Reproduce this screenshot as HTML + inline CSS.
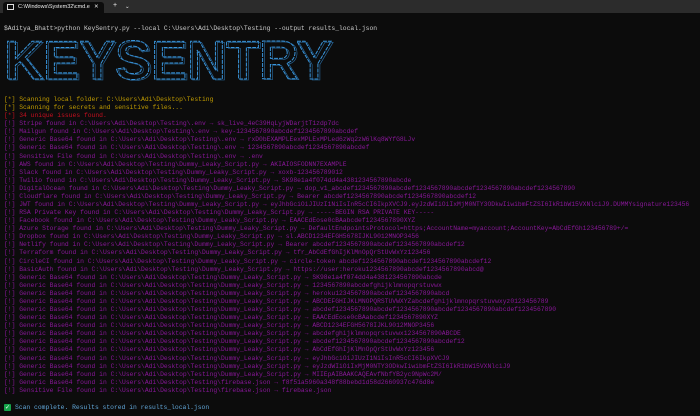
<!DOCTYPE html>
<html><head><meta charset="utf-8"><style>
html,body{margin:0;padding:0;background:#0c0c0c;width:700px;height:416px;overflow:hidden;}
.bar{position:absolute;left:0;top:0;width:700px;height:13px;background:#2c2c2c;}
.tab{position:absolute;left:3px;top:2px;width:101px;height:11px;background:#0c0c0c;border-radius:3px 3px 0 0;}
.tt{position:absolute;font-family:"Liberation Sans",sans-serif;font-size:5.5px;color:#eee;top:4px;white-space:pre;}
pre{position:absolute;left:4px;margin:0;font-family:"Liberation Mono",monospace;font-size:6.35px;line-height:8.08px;white-space:pre;}
.y{color:#c19c00}.r{color:#c50f1f}.m{color:#881798}.w{color:#cccccc}.b{color:#61a6d8}
</style></head><body>
<div class="bar"></div><div class="tab"></div>
<div style="position:absolute;left:7px;top:4px;width:5px;height:4px;border:0.8px solid #ddd;"></div>
<div class="tt" style="left:18px">C:\Windows\System32\cmd.e</div>
<div class="tt" style="left:94px">✕</div>
<div class="tt" style="left:113px;font-size:7px;top:2px">+</div>
<div class="tt" style="left:125px">⌄</div>
<pre class="w" style="top:25px">$Aditya_Bhatt&gt;python KeySentry.py --local C:\Users\Adi\Desktop\Testing --output results_local.json</pre>
<svg style="position:absolute;left:0;top:34px" width="340" height="52">
<text x="4" y="45" font-family="Liberation Sans,sans-serif" font-weight="bold" font-size="55" textLength="328" lengthAdjust="spacingAndGlyphs" fill="none" stroke="#3a96dd" stroke-width="1" stroke-dasharray="4 1">KEYSENTRY</text>
<text x="6" y="46" font-family="Liberation Sans,sans-serif" font-weight="bold" font-size="55" textLength="328" lengthAdjust="spacingAndGlyphs" fill="none" stroke="#2a6fa8" stroke-width="0.6">KEYSENTRY</text>
</svg>
<pre style="top:96px"><span class="y">[*] Scanning local folder: C:\Users\Adi\Desktop\Testing
[*] Scanning for secrets and sensitive files...</span>
<span class="r">[*] 34 unique issues found.</span>
<span class="m">[!] Stripe found in C:\Users\Adi\Desktop\Testing\.env → sk_live_4eC39HqLyjWDarjtT1zdp7dc
[!] Mailgun found in C:\Users\Adi\Desktop\Testing\.env → key-1234567890abcdef1234567890abcdef
[!] Generic Base64 found in C:\Users\Adi\Desktop\Testing\.env → rxD0bEXAMPLEexMPLExMPLed6zWq2zW6lKq8WYfG8LJv
[!] Generic Base64 found in C:\Users\Adi\Desktop\Testing\.env → 1234567890abcdef1234567890abcdef
[!] Sensitive File found in C:\Users\Adi\Desktop\Testing\.env → .env
[!] AWS found in C:\Users\Adi\Desktop\Testing\Dummy_Leaky_Script.py → AKIAIOSFODNN7EXAMPLE
[!] Slack found in C:\Users\Adi\Desktop\Testing\Dummy_Leaky_Script.py → xoxb-123456789012
[!] Twilio found in C:\Users\Adi\Desktop\Testing\Dummy_Leaky_Script.py → SK98e1a4f074dd4a4381234567890abcde
[!] DigitalOcean found in C:\Users\Adi\Desktop\Testing\Dummy_Leaky_Script.py → dop_v1_abcdef1234567890abcdef1234567890abcdef1234567890abcdef1234567890
[!] Cloudflare found in C:\Users\Adi\Desktop\Testing\Dummy_Leaky_Script.py → Bearer abcdef1234567890abcdef1234567890abcdef12
[!] JWT found in C:\Users\Adi\Desktop\Testing\Dummy_Leaky_Script.py → eyJhbGciOiJIUzI1NiIsInR5cCI6IkpXVCJ9.eyJzdWIiOiIxMjM0NTY3ODkwIiwibmFtZSI6IkR1bW15VXNlciJ9.DUMMYsignature123456
[!] RSA Private Key found in C:\Users\Adi\Desktop\Testing\Dummy_Leaky_Script.py → -----BEGIN RSA PRIVATE KEY-----
[!] Facebook found in C:\Users\Adi\Desktop\Testing\Dummy_Leaky_Script.py → EAACEdEose0cBAabcdef1234567890XYZ
[!] Azure Storage found in C:\Users\Adi\Desktop\Testing\Dummy_Leaky_Script.py → DefaultEndpointsProtocol=https;AccountName=myaccount;AccountKey=AbCdEfGh123456789+/=
[!] Dropbox found in C:\Users\Adi\Desktop\Testing\Dummy_Leaky_Script.py → sl.ABCD1234EFGH5678IJKL9012MNOP3456
[!] Netlify found in C:\Users\Adi\Desktop\Testing\Dummy_Leaky_Script.py → Bearer abcdef1234567890abcdef1234567890abcdef12
[!] Terraform found in C:\Users\Adi\Desktop\Testing\Dummy_Leaky_Script.py → tfr_AbCdEfGhIjKlMnOpQrStUvWxYz123456
[!] CircleCI found in C:\Users\Adi\Desktop\Testing\Dummy_Leaky_Script.py → circle-token abcdef1234567890abcdef1234567890abcdef12
[!] BasicAuth found in C:\Users\Adi\Desktop\Testing\Dummy_Leaky_Script.py → https://user:heroku1234567890abcdef1234567890abcd@
[!] Generic Base64 found in C:\Users\Adi\Desktop\Testing\Dummy_Leaky_Script.py → SK98e1a4f074dd4a4381234567890abcde
[!] Generic Base64 found in C:\Users\Adi\Desktop\Testing\Dummy_Leaky_Script.py → 1234567890abcdefghijklmnopqrstuvwx
[!] Generic Base64 found in C:\Users\Adi\Desktop\Testing\Dummy_Leaky_Script.py → heroku1234567890abcdef1234567890abcd
[!] Generic Base64 found in C:\Users\Adi\Desktop\Testing\Dummy_Leaky_Script.py → ABCDEFGHIJKLMNOPQRSTUVWXYZabcdefghijklmnopqrstuvwxyz0123456789
[!] Generic Base64 found in C:\Users\Adi\Desktop\Testing\Dummy_Leaky_Script.py → abcdef1234567890abcdef1234567890abcdef1234567890abcdef1234567890
[!] Generic Base64 found in C:\Users\Adi\Desktop\Testing\Dummy_Leaky_Script.py → EAACEdEose0cBAabcdef1234567890XYZ
[!] Generic Base64 found in C:\Users\Adi\Desktop\Testing\Dummy_Leaky_Script.py → ABCD1234EFGH5678IJKL9012MNOP3456
[!] Generic Base64 found in C:\Users\Adi\Desktop\Testing\Dummy_Leaky_Script.py → abcdefghijklmnopqrstuvwx1234567890ABCDE
[!] Generic Base64 found in C:\Users\Adi\Desktop\Testing\Dummy_Leaky_Script.py → abcdef1234567890abcdef1234567890abcdef12
[!] Generic Base64 found in C:\Users\Adi\Desktop\Testing\Dummy_Leaky_Script.py → AbCdEfGhIjKlMnOpQrStUvWxYz123456
[!] Generic Base64 found in C:\Users\Adi\Desktop\Testing\Dummy_Leaky_Script.py → eyJhbGciOiJIUzI1NiIsInR5cCI6IkpXVCJ9
[!] Generic Base64 found in C:\Users\Adi\Desktop\Testing\Dummy_Leaky_Script.py → eyJzdWIiOiIxMjM0NTY3ODkwIiwibmFtZSI6IkR1bW15VXNlciJ9
[!] Generic Base64 found in C:\Users\Adi\Desktop\Testing\Dummy_Leaky_Script.py → MIIEpAIBAAKCAQEAvfNbfYB2yc9NpWc2M/
[!] Generic Base64 found in C:\Users\Adi\Desktop\Testing\firebase.json → f8f51a5960a348f88bebd1d58d2660937c476d8e
[!] Sensitive File found in C:\Users\Adi\Desktop\Testing\firebase.json → firebase.json</span></pre>
<div style="position:absolute;left:4px;top:404px;width:7px;height:7px;background:#16a34a;border-radius:1px;color:#fff;font-size:6px;line-height:7px;text-align:center;font-family:'DejaVu Sans',sans-serif;">✓</div>
<pre class="b" style="top:404px;left:15px">Scan complete. Results stored in results_local.json</pre>
</body></html>
